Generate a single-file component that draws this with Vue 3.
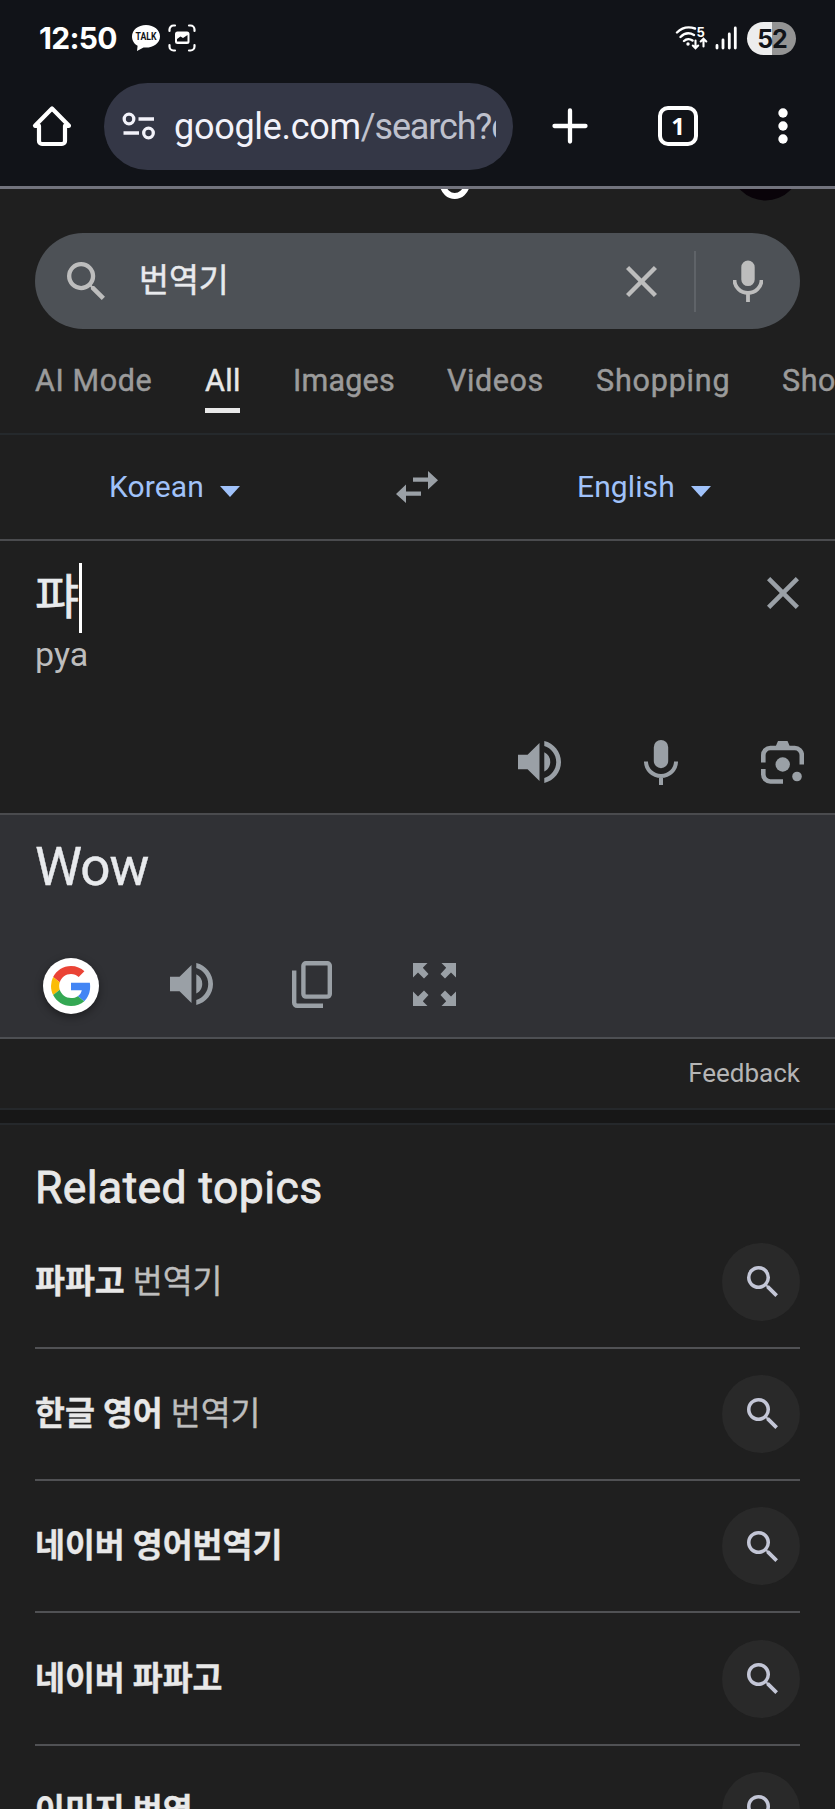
<script setup>
const tabs = [
  { label: 'AI Mode', cls: 't-ai' },
  { label: 'All', cls: 't-all', active: true },
  { label: 'Images', cls: 't-img' },
  { label: 'Videos', cls: 't-vid' },
  { label: 'Shopping', cls: 't-shop' },
  { label: 'Short videos', cls: 't-short' },
]
const topics = [
  { strong: '파파고', rest: ' 번역기' },
  { strong: '한글 영어', rest: ' 번역기' },
  { strong: '네이버 영어번역기', rest: '' },
  { strong: '네이버 파파고', rest: '' },
  { strong: '이미지 번역', rest: '' },
]
const icons = {
  search: 'M15.5 14h-.79l-.28-.27A6.47 6.47 0 0 0 16 9.5 6.5 6.5 0 1 0 9.5 16c1.61 0 3.09-.59 4.23-1.57l.27.28v.79l5 4.99L20.49 19l-4.99-5zm-6 0C7.01 14 5 11.99 5 9.5S7.01 5 9.5 5 14 7.01 14 9.5 11.99 14 9.5 14z',
  close: 'M19 6.41 17.59 5 12 10.59 6.41 5 5 6.41 10.59 12 5 17.59 6.41 19 12 13.41 17.59 19 19 17.59 13.41 12z',
  volume: 'M3 9v6h4l5 5V4L7 9H3zm13.5 3A4.5 4.5 0 0 0 14 7.97v8.05c1.48-.73 2.5-2.25 2.5-4.02zM14 3.23v2.06c2.89.86 5 3.54 5 6.71s-2.11 5.85-5 6.71v2.06c4.01-.91 7-4.49 7-8.77s-2.99-7.86-7-8.77z',
}
</script>

<template>
  <div class="phone">
    <header class="browser">
      <div class="status">
        <span class="clock">12:50</span>
        <svg class="talk" viewBox="0 0 30 28">
          <path d="M15 1C7 1 1 6 1 12.5c0 4.200 2.300 7.500 5.600 9.300L6 27l6.500-3.600c9 1 16.500-4 16.500-11C29 6 23 1 15 1z" fill="#fff" />
          <text x="15" y="16" text-anchor="middle" textLength="21" lengthAdjust="spacingAndGlyphs">TALK</text>
        </svg>
        <svg class="capture" viewBox="0 0 28 28" fill="none" stroke="#fff" stroke-width="2.200" stroke-linecap="round">
          <path d="M1.500 7V5.500a4 4 0 0 1 4-4H7M21 1.500h1.500a4 4 0 0 1 4 4V7M26.500 21v1.500a4 4 0 0 1-4 4H21M7 26.500H5.500a4 4 0 0 1-4-4V21" />
          <rect x="7" y="7.500" width="14.500" height="12.500" rx="2.500" fill="#fff" stroke="none" />
          <path d="M9 17.500v-2.500l3.500-2.500 2.500 1.500 4.500-3v6.500z" fill="#111318" stroke="none" />
        </svg>
        <span class="grow"></span>
        <svg class="wifi" viewBox="0 0 34 26" fill="none" stroke="#fff" stroke-width="2.400" stroke-linecap="round">
          <path d="M2 7.500C7 2.500 14 1.500 20 3.500M5.500 12c4-4 9-4.500 13.500-2M9 16c2.500-2.400 6-2.400 8.500-.5" />
          <circle cx="13" cy="19" r="1.700" fill="#fff" stroke="none" />
          <path d="M20.500 15.500v7.500M17.800 20.500l2.700 2.800 2.700-2.800M28.500 21.500V14M25.700 16.500l2.800-2.800 2.800 2.800" stroke-width="2.100" />
          <text x="21.500" y="11.500">5</text>
        </svg>
        <svg class="signal" viewBox="0 0 22 24" fill="none" stroke="#fff" stroke-width="2.800" stroke-linecap="round">
          <path d="M2 19.500v2.500M8 14v8M14.300 8v14M20.300 2v20" />
        </svg>
        <span class="battery">52</span>
      </div>
      <div class="toolbar">
        <svg class="home" viewBox="0 0 40 42" fill="none" stroke="#fff" stroke-width="4.200" stroke-linejoin="round" stroke-linecap="round">
          <path d="M20 3.500 3 20.800h4V36a3 3 0 0 0 3 3h20a3 3 0 0 0 3-3V20.800h4z" />
        </svg>
        <div class="omnibox">
          <svg class="tune" viewBox="0 0 34 28" fill="none" stroke="#f2f2fa" stroke-width="3.300">
            <circle cx="7" cy="7" r="4.800" /><path d="M16.500 7H32M1.500 21H17" /><circle cx="26.500" cy="21" r="4.800" />
          </svg>
          <div class="url"><span class="host">google.com</span><span class="path">/search?q=</span></div>
        </div>
        <svg class="plus" viewBox="0 0 36 36" stroke="#fff" stroke-width="4.300" stroke-linecap="round"><path d="M18 2.500v31M2.500 18h31" /></svg>
        <span class="count">1</span>
        <svg class="more" viewBox="0 0 10 36" fill="#fff"><circle cx="5" cy="5" r="4.700" /><circle cx="5" cy="18" r="4.700" /><circle cx="5" cy="31" r="4.700" /></svg>
      </div>
    </header>

    <div class="logo-strip">
      <svg viewBox="0 0 835 44" width="835" height="44">
        <path d="M442.500-5c2.500 16 22 16 24.500 0" fill="none" stroke="#fff" stroke-width="6" />
        <circle cx="765.500" cy="-23.500" r="35" fill="#090309" />
      </svg>
    </div>

    <div class="searchbox">
      <svg class="s-icon" viewBox="3 3 17.500 17.500"><path :d="icons.search" /></svg>
      <span class="query">번역기</span>
      <svg class="s-close" viewBox="5 5 14 14"><path :d="icons.close" /></svg>
      <i class="bar"></i>
      <svg class="s-mic" viewBox="0 0 30 42"><path d="M15 .5a6.700 6.700 0 0 1 6.700 6.700v12.200a6.700 6.700 0 0 1-13.400 0V7.200A6.700 6.700 0 0 1 15 .5z" /><path d="M1.500 20a13.500 13 0 0 0 27 0M15 33v9" fill="none" stroke="#bdbdbd" stroke-width="3.800" /></svg>
    </div>

    <nav class="tabs">
      <span v-for="t in tabs" :key="t.label" class="tab" :class="[t.cls, { active: t.active }]">{{ t.label }}</span>
    </nav>

    <section class="langs">
      <div class="lang from"><span>Korean</span><i class="caret-down"></i></div>
      <svg class="swap" viewBox="0 0 42 32"><path d="M17 6.500h15V0l10 9.200-10 9.200v-7.700H17zM25 20.500H10v-7L0 23l10 9v-7.200h15z" /></svg>
      <div class="lang to"><span>English</span><i class="caret-down"></i></div>
    </section>

    <section class="source">
      <div class="source-top">
        <div>
          <div class="typed">퍄<i class="cursor"></i></div>
          <div class="roman">pya</div>
        </div>
        <svg class="x-big" viewBox="5 5 14 14"><path :d="icons.close" /></svg>
      </div>
      <div class="source-tools">
        <svg class="vol" viewBox="3 3.230 18 17.540"><path :d="icons.volume" /></svg>
        <svg class="mic" viewBox="0 0 34 45"><path d="M17 0a7.200 7.200 0 0 1 7.200 7.200v13.800a7.200 7.200 0 0 1-14.400 0V7.200A7.200 7.200 0 0 1 17 0z" /><path d="M2 21.500a15 14.500 0 0 0 30 0M17 36v9" fill="none" stroke="#9aa0a6" stroke-width="4" /></svg>
        <svg class="lens" viewBox="0 0 43 43">
          <path d="M2.300 21.500V14a7 7 0 0 1 7-7h24.500a7 7 0 0 1 7 7v9.500M2.300 28v5.500a7 7 0 0 0 7 7H22" fill="none" stroke="#9aa0a6" stroke-width="4.600" />
          <path d="M14 7l3-7h9.500l3 7z" /><circle cx="21.700" cy="23.500" r="7.200" /><circle cx="36" cy="35.500" r="4.800" />
        </svg>
      </div>
    </section>

    <section class="result">
      <div class="wow">Wow</div>
      <div class="result-tools">
        <span class="g-badge">
          <svg viewBox="0 0 48 48">
            <path fill="#EA4335" d="M24 9.500c3.540 0 6.710 1.220 9.210 3.600l6.850-6.850C35.900 2.380 30.470 0 24 0 14.620 0 6.510 5.380 2.560 13.220l7.980 6.190C12.430 13.720 17.740 9.500 24 9.500z" />
            <path fill="#4285F4" d="M46.980 24.550c0-1.570-.15-3.090-.38-4.550H24v9.020h12.940c-.58 2.960-2.260 5.480-4.780 7.180l7.730 6c4.510-4.180 7.090-10.360 7.090-17.650z" />
            <path fill="#FBBC05" d="M10.530 28.590A14.500 14.500 0 0 1 9.770 24c0-1.600.27-3.140.76-4.590l-7.980-6.190A23.900 23.900 0 0 0 0 24c0 3.880.92 7.540 2.560 10.780l7.970-6.190z" />
            <path fill="#34A853" d="M24 48c6.480 0 11.930-2.130 15.890-5.810l-7.730-6c-2.150 1.450-4.920 2.300-8.160 2.300-6.260 0-11.570-4.220-13.470-9.910l-7.980 6.190C6.510 42.620 14.620 48 24 48z" />
          </svg>
        </span>
        <svg class="vol" viewBox="3 3.230 18 17.540"><path :d="icons.volume" /></svg>
        <svg class="copy" viewBox="0 0 40 47" fill="none" stroke="#9aa0a6" stroke-width="4.400"><rect x="11.400" y="2.200" width="26.400" height="33.400" rx="2.500" /><path d="M2.200 9.500v32.300a3 3 0 0 0 3 3H31" /></svg>
        <svg class="expand" viewBox="0 0 43 43">
          <path d="M0 0h14.500L9.800 4.700l5.700 6.300-4.500 4.500-6-5.900L0 14.500zM43 0H28.500l4.700 4.700-5.700 6.300 4.500 4.500 6-5.900 5 4.900zM0 43h14.500l-4.700-4.700 5.700-6.300-4.500-4.500-6 5.900-5-4.900zM43 43H28.500l4.700-4.700-5.700-6.300 4.500-4.500 6 5.900 5-4.900z" />
        </svg>
      </div>
    </section>

    <div class="feedback"><span>Feedback</span></div>
    <div class="gap"></div>

    <section class="related">
      <h2><span>Related topics</span></h2>
      <div v-for="t in topics" :key="t.strong" class="topic">
        <span class="topic-text"><b>{{ t.strong }}</b>{{ t.rest }}</span>
        <span class="round"><svg viewBox="3 3 17.500 17.500"><path :d="icons.search" /></svg></span>
      </div>
    </section>
  </div>
</template>

<style>
html, body { margin: 0; background: #1f1f1f; overflow: hidden; }
</style>

<style scoped>
* { box-sizing: border-box; }
svg { display: block; flex: none; }
.phone { width: 835px; height: 1809px; overflow: hidden; background: #1f1f1f; font-family: Roboto, "Noto Sans CJK KR", sans-serif; color: #e8e8e8; white-space: nowrap; }
.browser { height: 189px; background: #111318; border-bottom: 3px solid #72737d; }
.status { display: flex; align-items: center; height: 76px; padding: 0 39px 0 39px; }
.clock { width: 92px; font: 700 30px/76px Inter, sans-serif; letter-spacing: -0.7px; color: #fff; }
.talk { width: 30px; height: 28px; }
.talk text { font: 700 10.5px Roboto, sans-serif; fill: #111318; }
.capture { width: 28px; height: 28px; margin-left: 7px; }
.grow { flex: 1; }
.wifi { width: 34px; height: 26px; margin-right: -1px; }
.wifi text { font: 700 13px Inter, sans-serif; fill: #fff; stroke: none; }
.signal { width: 22px; height: 24px; margin: 0 10px 0 7px; }
.battery { width: 49px; height: 33px; border-radius: 17px; text-align: center; background: linear-gradient(90deg, #ededed 52%, #949494 52%); color: #111318; font: 700 25px/34px Inter, sans-serif; letter-spacing: -1px; padding-left: 1px; }
.toolbar { display: flex; align-items: center; height: 100px; padding-left: 32px; }
.home { width: 40px; height: 42px; }
.omnibox { display: flex; align-items: center; width: 409px; height: 87px; margin-left: 32px; border-radius: 44px; background: #343746; padding-left: 18px; }
.tune { width: 34px; height: 28px; }
.url { width: 322px; margin-left: 18px; padding-top: 2px; overflow: hidden; font-size: 36px; line-height: 60px; }
.host { color: #f2f2fa; letter-spacing: -0.3px; }
.path { color: #bfc1cd; letter-spacing: -1.150px; }
.plus { width: 36px; height: 36px; margin-left: 39px; }
.count { width: 40px; height: 40px; margin-left: 70px; border: 4.500px solid #fff; border-radius: 10px; text-align: center; font: 700 24px/31px "Open Sans", sans-serif; color: #fff; }
.more { width: 10px; height: 36px; margin-left: 79.500px; }
.logo-strip { height: 44px; overflow: hidden; }
.searchbox { display: flex; align-items: center; width: 765px; height: 96px; margin-left: 35px; border-radius: 48px; background: #4d5156; fill: #bdbdbd; }
.s-icon { width: 38px; height: 38px; margin-left: 32px; }
.query { width: 487px; margin-left: 34px; font-size: 32.500px; line-height: 60px; color: #e8eaed; -webkit-text-stroke: 0.5px #e8eaed; }
.s-close { width: 31px; height: 31px; }
.bar { width: 2px; height: 61px; margin-left: 37px; background: #5f6368; }
.s-mic { width: 30px; height: 42px; margin-left: 37px; }
.tabs { display: flex; height: 106px; padding: 31px 0 0 35px; border-bottom: 2px solid #25292c; font-size: 30.500px; line-height: 41px; color: #9b9b9b; -webkit-text-stroke: 0.45px currentColor; }
.tab { flex: none; height: 53px; }
.t-ai { width: 170px; letter-spacing: 0.6px; }
.t-all { width: 35px; margin-right: 53px; letter-spacing: 0.4px; }
.t-img { width: 154px; letter-spacing: 0.2px; }
.t-vid { width: 149px; letter-spacing: 0.6px; }
.t-shop { width: 186px; letter-spacing: 0.8px; }
.t-short { letter-spacing: 0.6px; }
.active { color: #e8e8e8; border-bottom: 5px solid #e8e8e8; }
.langs { display: flex; align-items: center; height: 106px; border-bottom: 2px solid #4a4b4e; color: #a0c2fa; font-size: 30px; }
.lang { display: flex; align-items: center; }
.lang span { line-height: 40px; letter-spacing: 0.1px; }
.from { width: 287px; margin-left: 109px; }
.to { margin-left: 139px; }
.caret-down { width: 0; height: 0; margin: 8px 0 0 16px; border: 10.500px solid transparent; border-top: 11px solid #a0c2fa; border-bottom: 0; }
.swap { width: 42px; height: 32px; fill: #9aa0a6; }
.source { height: 274px; border-bottom: 2px solid #4a4b4e; fill: #9aa0a6; }
.source-top { display: flex; justify-content: space-between; height: 199px; padding: 22px 36px 0 35px; }
.typed { display: flex; align-items: center; height: 70px; font-size: 48px; line-height: 70px; color: #e8eaed; -webkit-text-stroke: 0.6px #e8eaed; }
.cursor { width: 2.500px; height: 70px; background: #fff; }
.roman { font-size: 34px; line-height: 43px; color: #bdbdbd; }
.x-big { width: 32px; height: 32px; margin-top: 14px; }
.source-tools { display: flex; align-items: center; height: 44px; padding-left: 517.500px; }
.vol { width: 43px; height: 42px; }
.mic { width: 34px; height: 45px; margin-left: 83px; }
.lens { width: 43px; height: 43px; margin-left: 83px; }
.result { height: 224px; background: #303135; border-bottom: 2px solid #4d4f53; fill: #9aa0a6; }
.wow { height: 137px; padding: 18px 0 0 35px; font-size: 53px; line-height: 68px; letter-spacing: -1px; color: #e8eaed; -webkit-text-stroke: 0.4px #e8eaed; }
.result-tools { display: flex; align-items: center; height: 64px; padding-left: 43px; }
.g-badge { display: flex; align-items: center; justify-content: center; width: 56px; height: 56px; margin-right: 71px; margin-top: 3px; border-radius: 50%; background: #fff; box-shadow: 0 3px 9px #0006; }
.g-badge svg { width: 40px; height: 40px; }
.copy { width: 40px; height: 47px; margin-left: 79px; }
.expand { width: 43px; height: 43px; margin-left: 81px; }
.feedback { display: flex; justify-content: flex-end; align-items: center; height: 71px; padding: 0 35px 2px 0; border-bottom: 2px solid #25282b; color: #b5b5b5; font-size: 26px; }
.gap { height: 15px; background: #171717; border-bottom: 2px solid #25282b; }
.related { padding: 0 35px; }
h2 { margin: 0; height: 91.500px; padding-top: 35px; font-size: 44.500px; line-height: 56px; font-weight: 400; letter-spacing: 0.4px; -webkit-text-stroke: 0.8px #e8e8e8; }
.topic { display: flex; align-items: center; justify-content: space-between; height: 132.300px; border-bottom: 2px solid #505154; font-size: 32.500px; color: #bdbdbd; }
.topic-text { line-height: 48px; white-space: pre; -webkit-text-stroke: 0.4px currentColor; }
.topic b { color: #e8e8e8; font-weight: 700; }
.round { display: flex; align-items: center; justify-content: center; width: 78px; height: 78px; padding-left: 2px; border-radius: 50%; background: #292929; }
.round svg { width: 31px; height: 31px; fill: #c3c6d6; }
</style>
